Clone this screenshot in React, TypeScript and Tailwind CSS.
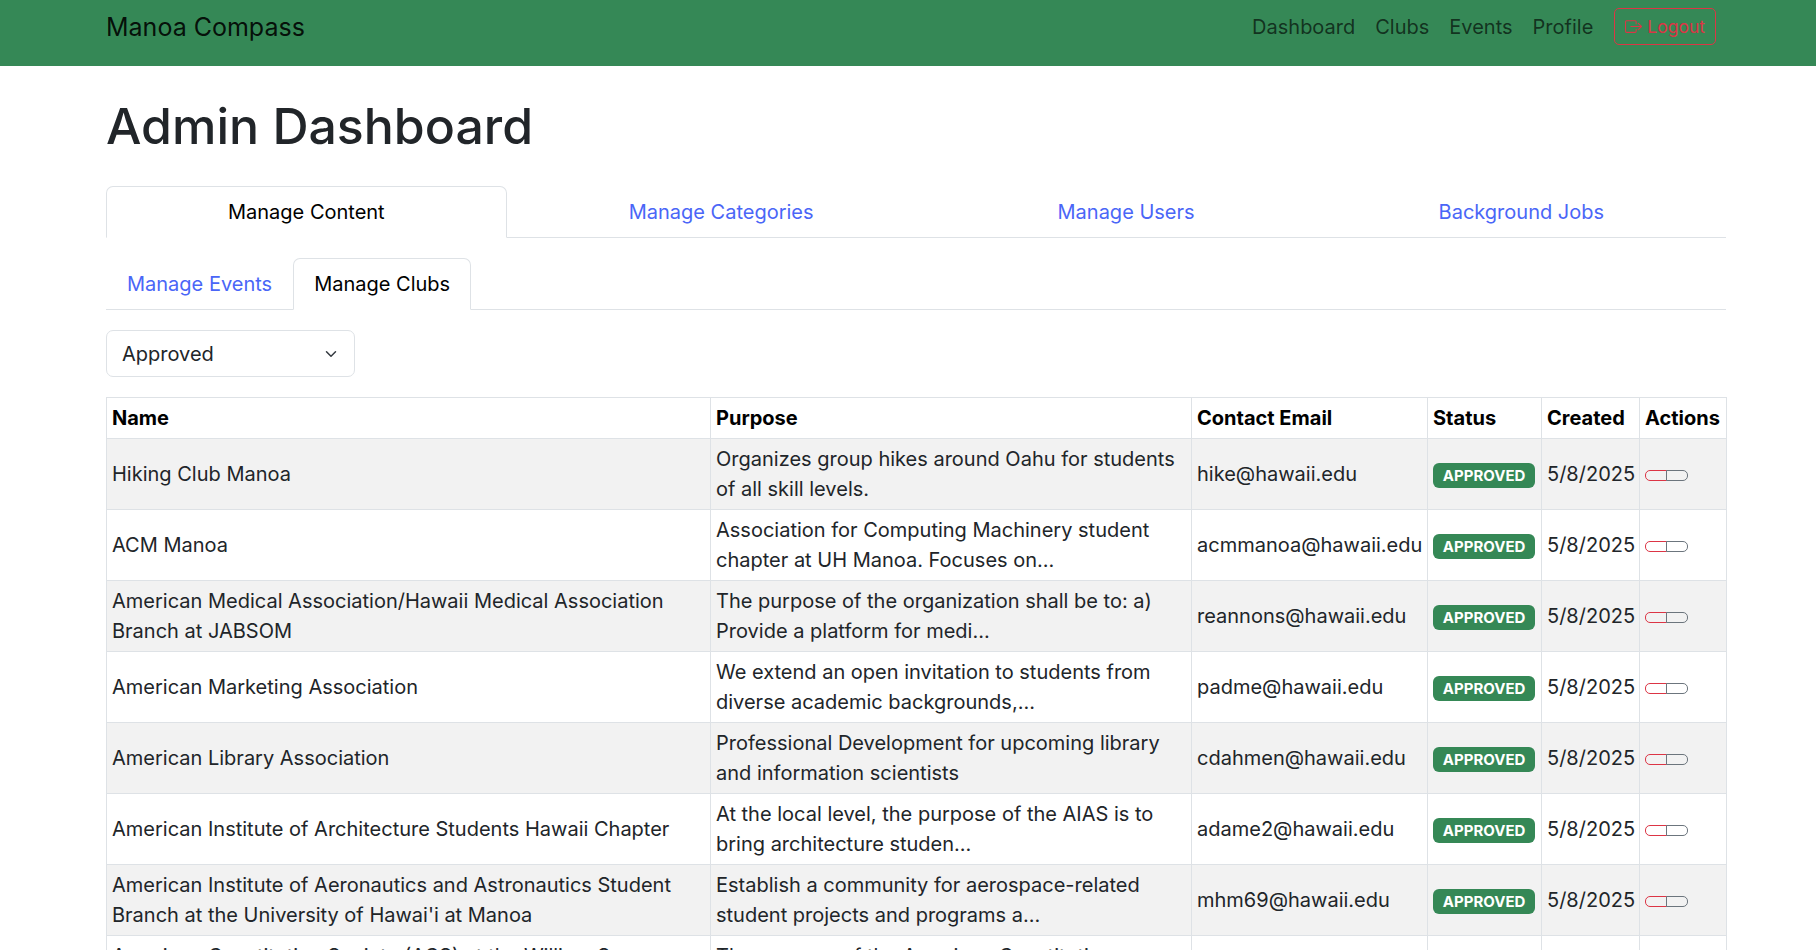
import React from "react";

type Row = { name: string; purpose: string; email: string };

const rows: Row[] = [
  {
    name: "Hiking Club Manoa",
    purpose: "Organizes group hikes around Oahu for students of all skill levels.",
    email: "hike@hawaii.edu",
  },
  {
    name: "ACM Manoa",
    purpose: "Association for Computing Machinery student chapter at UH Manoa. Focuses on...",
    email: "acmmanoa@hawaii.edu",
  },
  {
    name: "American Medical Association/Hawaii Medical Association Branch at JABSOM",
    purpose: "The purpose of the organization shall be to: a) Provide a platform for medi...",
    email: "reannons@hawaii.edu",
  },
  {
    name: "American Marketing Association",
    purpose: "We extend an open invitation to students from diverse academic backgrounds,...",
    email: "padme@hawaii.edu",
  },
  {
    name: "American Library Association",
    purpose: "Professional Development for upcoming library and information scientists",
    email: "cdahmen@hawaii.edu",
  },
  {
    name: "American Institute of Architecture Students Hawaii Chapter",
    purpose: "At the local level, the purpose of the AIAS is to bring architecture studen...",
    email: "adame2@hawaii.edu",
  },
  {
    name: "American Institute of Aeronautics and Astronautics Student Branch at the University of Hawai'i at Manoa",
    purpose: "Establish a community for aerospace-related student projects and programs a...",
    email: "mhm69@hawaii.edu",
  },
  {
    name: "American Constitution Society (ACS) at the William S. Richardson School of Law",
    purpose: "The purpose of the American Constitution Society at the William S. Richards...",
    email: "acs@hawaii.edu",
  },
];

function LogoutIcon() {
  return (
    <svg width="17" height="17" viewBox="0 0 16 16" fill="currentColor" aria-hidden="true">
      <path
        fillRule="evenodd"
        d="M10 12.5a.5.5 0 0 1-.5.5h-8a.5.5 0 0 1-.5-.5v-9a.5.5 0 0 1 .5-.5h8a.5.5 0 0 1 .5.5v2a.5.5 0 0 0 1 0v-2A1.5 1.5 0 0 0 9.5 2h-8A1.5 1.5 0 0 0 0 3.5v9A1.5 1.5 0 0 0 1.5 14h8a1.5 1.5 0 0 0 1.5-1.5v-2a.5.5 0 0 0-1 0z"
      />
      <path
        fillRule="evenodd"
        d="M15.854 8.354a.5.5 0 0 0 0-.708l-3-3a.5.5 0 0 0-.708.708L14.293 7.5H5.5a.5.5 0 0 0 0 1h8.793l-2.147 2.146a.5.5 0 0 0 .708.708z"
      />
    </svg>
  );
}

function Chevron() {
  return (
    <svg width="12" height="12" viewBox="0 0 16 16" aria-hidden="true">
      <path
        d="m2 5 6 6 6-6"
        fill="none"
        stroke="#343a40"
        strokeWidth="2"
        strokeLinecap="round"
        strokeLinejoin="round"
      />
    </svg>
  );
}

export default function App() {
  const cell = "border border-[#dee2e6] px-[5px] py-[5px] align-middle text-left";
  return (
    <div className="h-[950px] overflow-hidden bg-white font-['Inter',sans-serif] text-[20px] leading-[30px] text-[#212529]">
      <nav className="h-[66px] bg-[#358856] pl-[106px] pr-[100px] pt-[8px]">
        <div className="flex h-[37px] items-center justify-between">
          <a className="text-[25px] leading-[36px] text-black/90">Manoa Compass</a>
          <div className="flex items-center">
            <a className="px-[10px] text-[20px] leading-[30px] text-black/65">Dashboard</a>
            <a className="px-[10px] text-[20px] leading-[30px] text-black/65">Clubs</a>
            <a className="px-[10px] text-[20px] leading-[30px] text-black/65">Events</a>
            <a className="px-[10px] text-[20px] leading-[30px] text-black/65">Profile</a>
            <button className="ml-[11px] flex h-[37px] items-center gap-[5px] rounded-[5px] border border-[#dc3545] px-[10px] text-[17.5px] leading-[26px] text-[#dc3545]">
              <LogoutIcon />
              <span>Logout</span>
            </button>
          </div>
        </div>
      </nav>

      <main className="pl-[106px] pr-[90px]">
        <h1 className="mt-[30px] text-[50px] font-medium leading-[60px] text-[#212529]">Admin Dashboard</h1>

        <div className="mt-[30px] flex border-b border-[#dee2e6]">
          <div className="-mb-px flex-auto rounded-t-[7px] border border-[#dee2e6] border-b-white bg-white px-[20px] py-[10px] text-center text-black">
            Manage Content
          </div>
          <div className="-mb-px flex-auto border border-transparent px-[20px] py-[10px] text-center text-[#4a66f7]">
            Manage Categories
          </div>
          <div className="-mb-px flex-auto border border-transparent px-[20px] py-[10px] text-center text-[#4a66f7]">
            Manage Users
          </div>
          <div className="-mb-px flex-auto border border-transparent px-[20px] py-[10px] text-center text-[#4a66f7]">
            Background Jobs
          </div>
        </div>

        <div className="mt-[20px] flex border-b border-[#dee2e6]">
          <div className="-mb-px border border-transparent px-[20px] py-[10px] text-[#4a66f7]">Manage Events</div>
          <div className="-mb-px rounded-t-[7px] border border-[#dee2e6] border-b-white bg-white px-[20px] py-[10px] text-black">
            Manage Clubs
          </div>
        </div>

        <div className="mt-[20px] flex h-[47px] w-[249px] items-center justify-between rounded-[7px] border border-[#dee2e6] pl-[15px] pr-[17px]">
          <span>Approved</span>
          <Chevron />
        </div>

        <table className="mt-[20px] w-[1620px] table-fixed border-collapse">
          <colgroup>
            <col className="w-[604px]" />
            <col className="w-[481px]" />
            <col className="w-[236px]" />
            <col className="w-[114px]" />
            <col className="w-[98px]" />
            <col className="w-[87px]" />
          </colgroup>
          <thead>
            <tr className="text-black">
              <th className={`${cell} font-bold`}>Name</th>
              <th className={`${cell} font-bold`}>Purpose</th>
              <th className={`${cell} font-bold`}>Contact Email</th>
              <th className={`${cell} font-bold`}>Status</th>
              <th className={`${cell} font-bold`}>Created</th>
              <th className={`${cell} font-bold`}>Actions</th>
            </tr>
          </thead>
          <tbody>
            {rows.map((r, i) => (
              <tr key={r.name} className={i % 2 === 0 ? "bg-[#f2f2f2]" : "bg-white"}>
                <td className={cell}>{r.name}</td>
                <td className={cell}>{r.purpose}</td>
                <td className={cell}>{r.email}</td>
                <td className={cell}>
                  <span className="inline-block rounded-[6px] bg-[#358856] px-[9.75px] py-[5.25px] text-[15px] font-bold leading-none text-white">
                    APPROVED
                  </span>
                </td>
                <td className={cell}>5/8/2025</td>
                <td className={cell}>
                  <span className="inline-block h-[11px] w-[22px] rounded-l-[5px] border border-[#dc3545]" />
                  <span className="-ml-px inline-block h-[11px] w-[22px] rounded-r-[5px] border border-[#6c757d]" />
                </td>
              </tr>
            ))}
          </tbody>
        </table>
      </main>
    </div>
  );
}
